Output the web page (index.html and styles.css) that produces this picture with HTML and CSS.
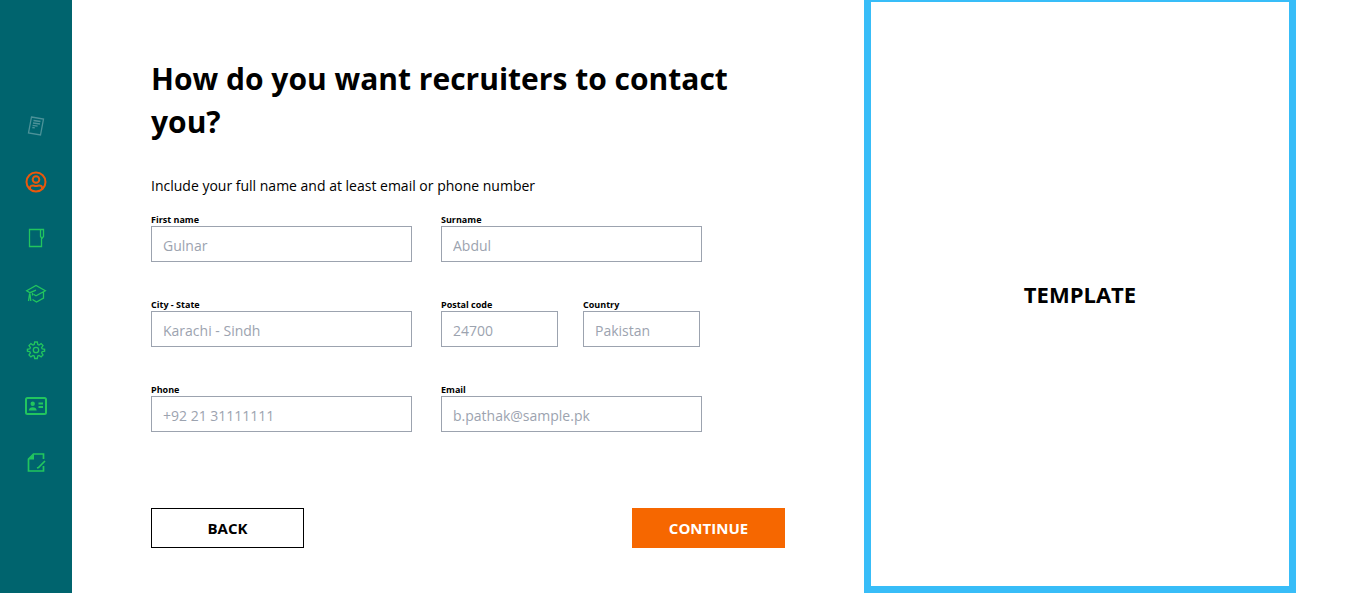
FILE: index.html
```html
<!DOCTYPE html>
<html lang="en">
<head>
<meta charset="utf-8">
<meta name="viewport" content="width=device-width, initial-scale=1">
<title>Contact details</title>
<link rel="stylesheet" href="styles.css">
</head>
<body>
<div class="page">
  <nav class="sidebar" aria-label="Resume sections">
    <a class="step step-done" href="#intro" aria-label="Introduction">
      <svg class="icon" viewBox="0 0 24 24"><path d="M7.500 3 19.500 5 16.500 21 4.500 19Z"/><path d="M9.500 6.500l7 1M9 9l7 1M8.600 11.300l5 .8M8.300 13.500l2.500.4"/></svg>
    </a>
    <a class="step step-current" href="#contact" aria-label="Contact">
      <svg class="icon icon-bold" viewBox="0 0 24 24"><circle cx="12" cy="12" r="9.500"/><circle cx="12" cy="9.500" r="3.300"/><path d="M6 19v-1.200c0-1.700 1.500-2.300 3-2.300 1 0 1.500.5 3 .5s2-.5 3-.5c1.500 0 3 .6 3 2.300V19"/></svg>
    </a>
    <a class="step" href="#experience" aria-label="Experience">
      <svg class="icon" viewBox="0 0 24 24"><path d="M16.500 3.500h-11v17h12v-8.500M16.500 3.500h3v7l-1.500 2-1.500-2Z"/></svg>
    </a>
    <a class="step" href="#education" aria-label="Education">
      <svg class="icon" viewBox="0 0 24 24"><path d="M9.500 12.200l2.500 1.500 9.300-5L12 3.500 2.700 8.700l3.300 2 6-2.500M6 10.500c-1 3-.8 5-1.500 8.500M6 12l.8 7M8.500 17.500l4 2.500 7-4V10M8.500 13.500v-2.500"/></svg>
    </a>
    <a class="step" href="#skills" aria-label="Skills">
      <svg class="icon" viewBox="0 0 24 24"><circle cx="12" cy="12" r="2.700"/><path d="M10.700 4h2.600l.5 2.500 1.200.5 2.100-1.400 1.900 1.900-1.400 2.100.5 1.200 2.500.5v1.900l-2.500.5-.5 1.200 1.400 2.100-1.900 1.900-2.100-1.400-1.200.5-.5 2.500h-2.600l-.5-2.500-1.200-.5-2.100 1.400L5 17l1.400-2.100-.5-1.200-2.500-.5v-1.900l2.500-.5.5-1.200L5 7.500l1.900-1.900L9 7l1.200-.5Z"/></svg>
    </a>
    <a class="step" href="#profile" aria-label="Profile">
      <svg class="icon icon-bold" viewBox="0 0 24 24"><rect x="2" y="4" width="20" height="16" rx="1.500"/><path d="M14.500 9.500h4.500M14.500 13h4.500"/><path class="solid" d="M8.700 7.500a2.200 2.200 0 1 1 0 4.400 2.200 2.200 0 0 1 0-4.400ZM4.700 16.500c0-4.500 8-4.500 8 0Z"/></svg>
    </a>
    <a class="step" href="#finish" aria-label="Finish">
      <svg class="icon" viewBox="0 0 24 24"><path class="medium" d="M19.500 9V4H9.500l-5 5v12h15V16M21 11l-6.500 6.500-1.500.5"/><path class="solid" d="M10 4v5.500H4.500Z"/></svg>
    </a>
  </nav>

  <main class="content">
    <h1 class="title">How do you want recruiters to contact you?</h1>
    <p class="hint">Include your full name and at least email or phone number</p>
    <form class="form">
      <div class="fields">
        <div class="field">
          <label class="label" for="first-name">First name</label>
          <input class="input" id="first-name" type="text" placeholder="Gulnar">
        </div>
        <div class="field">
          <label class="label" for="surname">Surname</label>
          <input class="input" id="surname" type="text" placeholder="Abdul">
        </div>
        <div class="field">
          <label class="label" for="city">City - State</label>
          <input class="input" id="city" type="text" placeholder="Karachi - Sindh">
        </div>
        <div class="field-pair">
          <div class="field">
            <label class="label" for="postal">Postal code</label>
            <input class="input" id="postal" type="text" placeholder="24700">
          </div>
          <div class="field">
            <label class="label" for="country">Country</label>
            <input class="input" id="country" type="text" placeholder="Pakistan">
          </div>
        </div>
        <div class="field">
          <label class="label" for="phone">Phone</label>
          <input class="input" id="phone" type="tel" placeholder="+92 21 31111111">
        </div>
        <div class="field">
          <label class="label" for="email">Email</label>
          <input class="input" id="email" type="email" placeholder="b.pathak@sample.pk">
        </div>
      </div>
      <div class="actions">
        <button class="button button-back" type="button">BACK</button>
        <button class="button button-continue" type="submit">CONTINUE</button>
      </div>
    </form>
  </main>

  <aside class="template">
    <h2 class="template-title">TEMPLATE</h2>
  </aside>
</div>
</body>
</html>
```

FILE: styles.css
```css
* {
  box-sizing: border-box;
}

body {
  margin: 0;
  background: #fff;
  color: #000;
  font-family: "Open Sans", "Noto Sans", sans-serif;
}

.page {
  display: grid;
  grid-template-columns: 72px minmax(0, 11fr) minmax(0, 6fr);
  min-height: 100vh;
  padding-right: 68px;
}

.sidebar {
  display: flex;
  flex-direction: column;
  align-items: center;
  gap: 32px;
  padding-top: 114px;
  background: #00646e;
}

.step {
  display: block;
  height: 24px;
  color: #22c55e;
}

.step-done {
  color: #4c9299;
}

.step-current {
  color: #ea580c;
}

.icon {
  display: block;
  width: 24px;
  height: 24px;
  fill: none;
  stroke: currentColor;
  stroke-width: 1.3;
}

.icon-bold {
  stroke-width: 2;
}

.medium {
  stroke-width: 1.7;
}

.solid {
  fill: currentColor;
  stroke: none;
}

.content {
  padding: 57px 79px 44px;
}

.title {
  margin: 0;
  font-size: 30px;
  line-height: 43px;
  font-weight: 700;
}

.hint {
  margin: 32px 0 16px;
  font-size: 14px;
  line-height: 22px;
}

.fields {
  display: grid;
  grid-template-columns: 1fr 1fr;
  gap: 36px 29px;
  max-width: 551px;
}

.field {
  display: flex;
  flex-direction: column;
  min-width: 0;
}

.field-pair {
  display: grid;
  grid-template-columns: 1fr 1fr;
  gap: 25px;
  padding-right: 2px;
}

.label {
  font-size: 9px;
  line-height: 13px;
  font-weight: 700;
}

.input {
  width: 100%;
  height: 36px;
  padding: 2px 11px 0;
  border: 1px solid #9ca3af;
  border-radius: 0;
  background: #fff;
  color: #000;
  font: inherit;
  font-size: 14px;
}

.input::placeholder {
  color: #9ca3af;
  opacity: 1;
}

.actions {
  display: flex;
  justify-content: space-between;
  margin-top: 76px;
}

.button {
  width: 153px;
  height: 40px;
  padding: 0;
  border: 1px solid #000;
  font: inherit;
  font-size: 15px;
  font-weight: 700;
  cursor: pointer;
}

.button-back {
  background: #fff;
  color: #000;
}

.button-continue {
  border-color: #f66700;
  background: #f66700;
  color: #fff;
}

.template {
  display: flex;
  align-items: center;
  justify-content: center;
  border: 7px solid #38bdf8;
  border-top-width: 2px;
}

.template-title {
  margin: 0;
  font-size: 22px;
  line-height: 28px;
  font-weight: 700;
}
```
